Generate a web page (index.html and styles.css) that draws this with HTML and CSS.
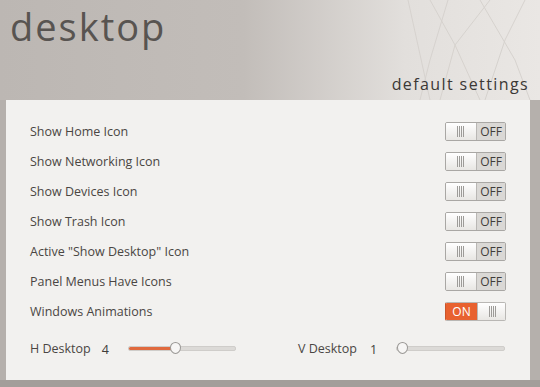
FILE: index.html
```html
<!DOCTYPE html>
<html lang="en">
<head>
    <meta charset="UTF-8">
    <meta name="viewport" content="width=device-width, initial-scale=1.0">
    <title>Desktop Settings</title>
    <link rel="stylesheet" href="styles.css">
</head>
<body>
    <div class="window">
        <div class="header">
            <svg class="pattern" width="260" height="100" viewBox="0 0 260 100">
                <g stroke="#d6d2ce" stroke-width="1" fill="none">
                    <path d="M128 0 L150 100"/>
                    <path d="M150 0 L175 45 L200 100"/>
                    <path d="M168 0 L150 60 L140 100"/>
                    <path d="M210 0 L175 45 L160 100"/>
                    <path d="M200 0 L235 60 L250 100"/>
                    <path d="M245 0 L225 40 L205 100"/>
                </g>
            </svg>
            <h1 class="title">desktop</h1>
            <div class="subtitle">default settings</div>
        </div>
        <div class="panel">
            <div class="row"><span class="label">Show Home Icon</span><span class="switch"><span class="knob"></span><span class="state">OFF</span></span></div>
            <div class="row"><span class="label">Show Networking Icon</span><span class="switch"><span class="knob"></span><span class="state">OFF</span></span></div>
            <div class="row"><span class="label">Show Devices Icon</span><span class="switch"><span class="knob"></span><span class="state">OFF</span></span></div>
            <div class="row"><span class="label">Show Trash Icon</span><span class="switch"><span class="knob"></span><span class="state">OFF</span></span></div>
            <div class="row"><span class="label">Active "Show Desktop" Icon</span><span class="switch"><span class="knob"></span><span class="state">OFF</span></span></div>
            <div class="row"><span class="label">Panel Menus Have Icons</span><span class="switch"><span class="knob"></span><span class="state">OFF</span></span></div>
            <div class="row"><span class="label">Windows Animations</span><span class="switch on"><span class="state">ON</span><span class="knob"></span></span></div>
            <div class="sliders">
                <div class="slider-group">
                    <span class="label">H Desktop</span>
                    <span class="value">4</span>
                    <div class="track"><div class="fill" style="width: 45px"></div><div class="thumb" style="left: 41px"></div></div>
                </div>
                <div class="slider-group right">
                    <span class="label">V Desktop</span>
                    <span class="value">1</span>
                    <div class="track"><div class="fill" style="width: 0"></div><div class="thumb" style="left: 0"></div></div>
                </div>
            </div>
        </div>
        <div class="footer"></div>
    </div>
</body>
</html>
```

FILE: styles.css
```css
body { margin: 0; font-family: "Open Sans", "DejaVu Sans", sans-serif; }
.window { width: 540px; height: 387px; background: #b5b0ac; overflow: hidden; }
.header { position: relative; height: 100px; background: linear-gradient(90deg, #bcb7b3 0%, #c2bdb9 45%, #e2dfdc 75%, #eae7e4 100%); }
.pattern { position: absolute; right: 0; top: 0; }
.title { position: absolute; left: 10px; top: 1px; margin: 0; font-size: 38px; font-weight: normal; letter-spacing: 2px; color: #585451; line-height: 50px; }
.subtitle { position: absolute; right: 11px; top: 73px; font-size: 16px; letter-spacing: 1.4px; color: #3b3835; }
.panel { margin-left: 6px; width: 524px; height: 280px; box-sizing: border-box; padding: 16px 24px 0 24px; background: #f2f1ef; }
.row { height: 30px; display: flex; align-items: center; justify-content: space-between; }
.label { font-size: 12.5px; color: #4a4643; }
.switch { display: flex; width: 61px; height: 19px; box-sizing: border-box; border: 1px solid #a9a7a4; border-radius: 2px; overflow: hidden; }
.knob { width: 30px; background: linear-gradient(#ffffff, #e8e6e3); border-right: 1px solid #b9b7b4; position: relative; }
.knob::after { content: ""; position: absolute; left: 11px; top: 3px; width: 8px; height: 11px; background: repeating-linear-gradient(90deg, #9d9b98 0 1px, transparent 1px 2px); }
.state { flex: 1; background: #dad8d5; font-size: 12px; color: #3f3c3a; display: flex; align-items: center; justify-content: center; }
.switch.on { border-color: #b9b7b4; border-left-color: #c9542a; }
.switch.on .state { flex: 0 0 31px; background: #e8612f; color: #fff; font-size: 12px; }
.switch.on .knob { flex: 1; border-right: none; border-left: 1px solid #b9b7b4; }
.sliders { display: flex; height: 44px; align-items: center; }
.slider-group { display: flex; align-items: center; width: 268px; }
.slider-group.right { width: 208px; }
.value { font-size: 12.5px; color: #3f3c3a; margin-left: 11px; margin-top: 2px; width: 16px; }
.slider-group.right .value { margin-left: 13px; }
.track { position: relative; width: 106px; height: 3px; background: #dcdad7; border: 1px solid #cfcdca; border-radius: 2px; margin-left: 10px; }
.slider-group.right .track { width: 107px; }
.fill { height: 100%; background: #e06a3e; border-radius: 2px; }
.thumb { position: absolute; top: -5px; width: 9px; height: 10px; background: #f7f6f5; border: 1px solid #9a9895; border-radius: 50% 50% 50% 50% / 45% 45% 55% 55%; }
.footer { height: 7px; background: #a29e9a; }
```
